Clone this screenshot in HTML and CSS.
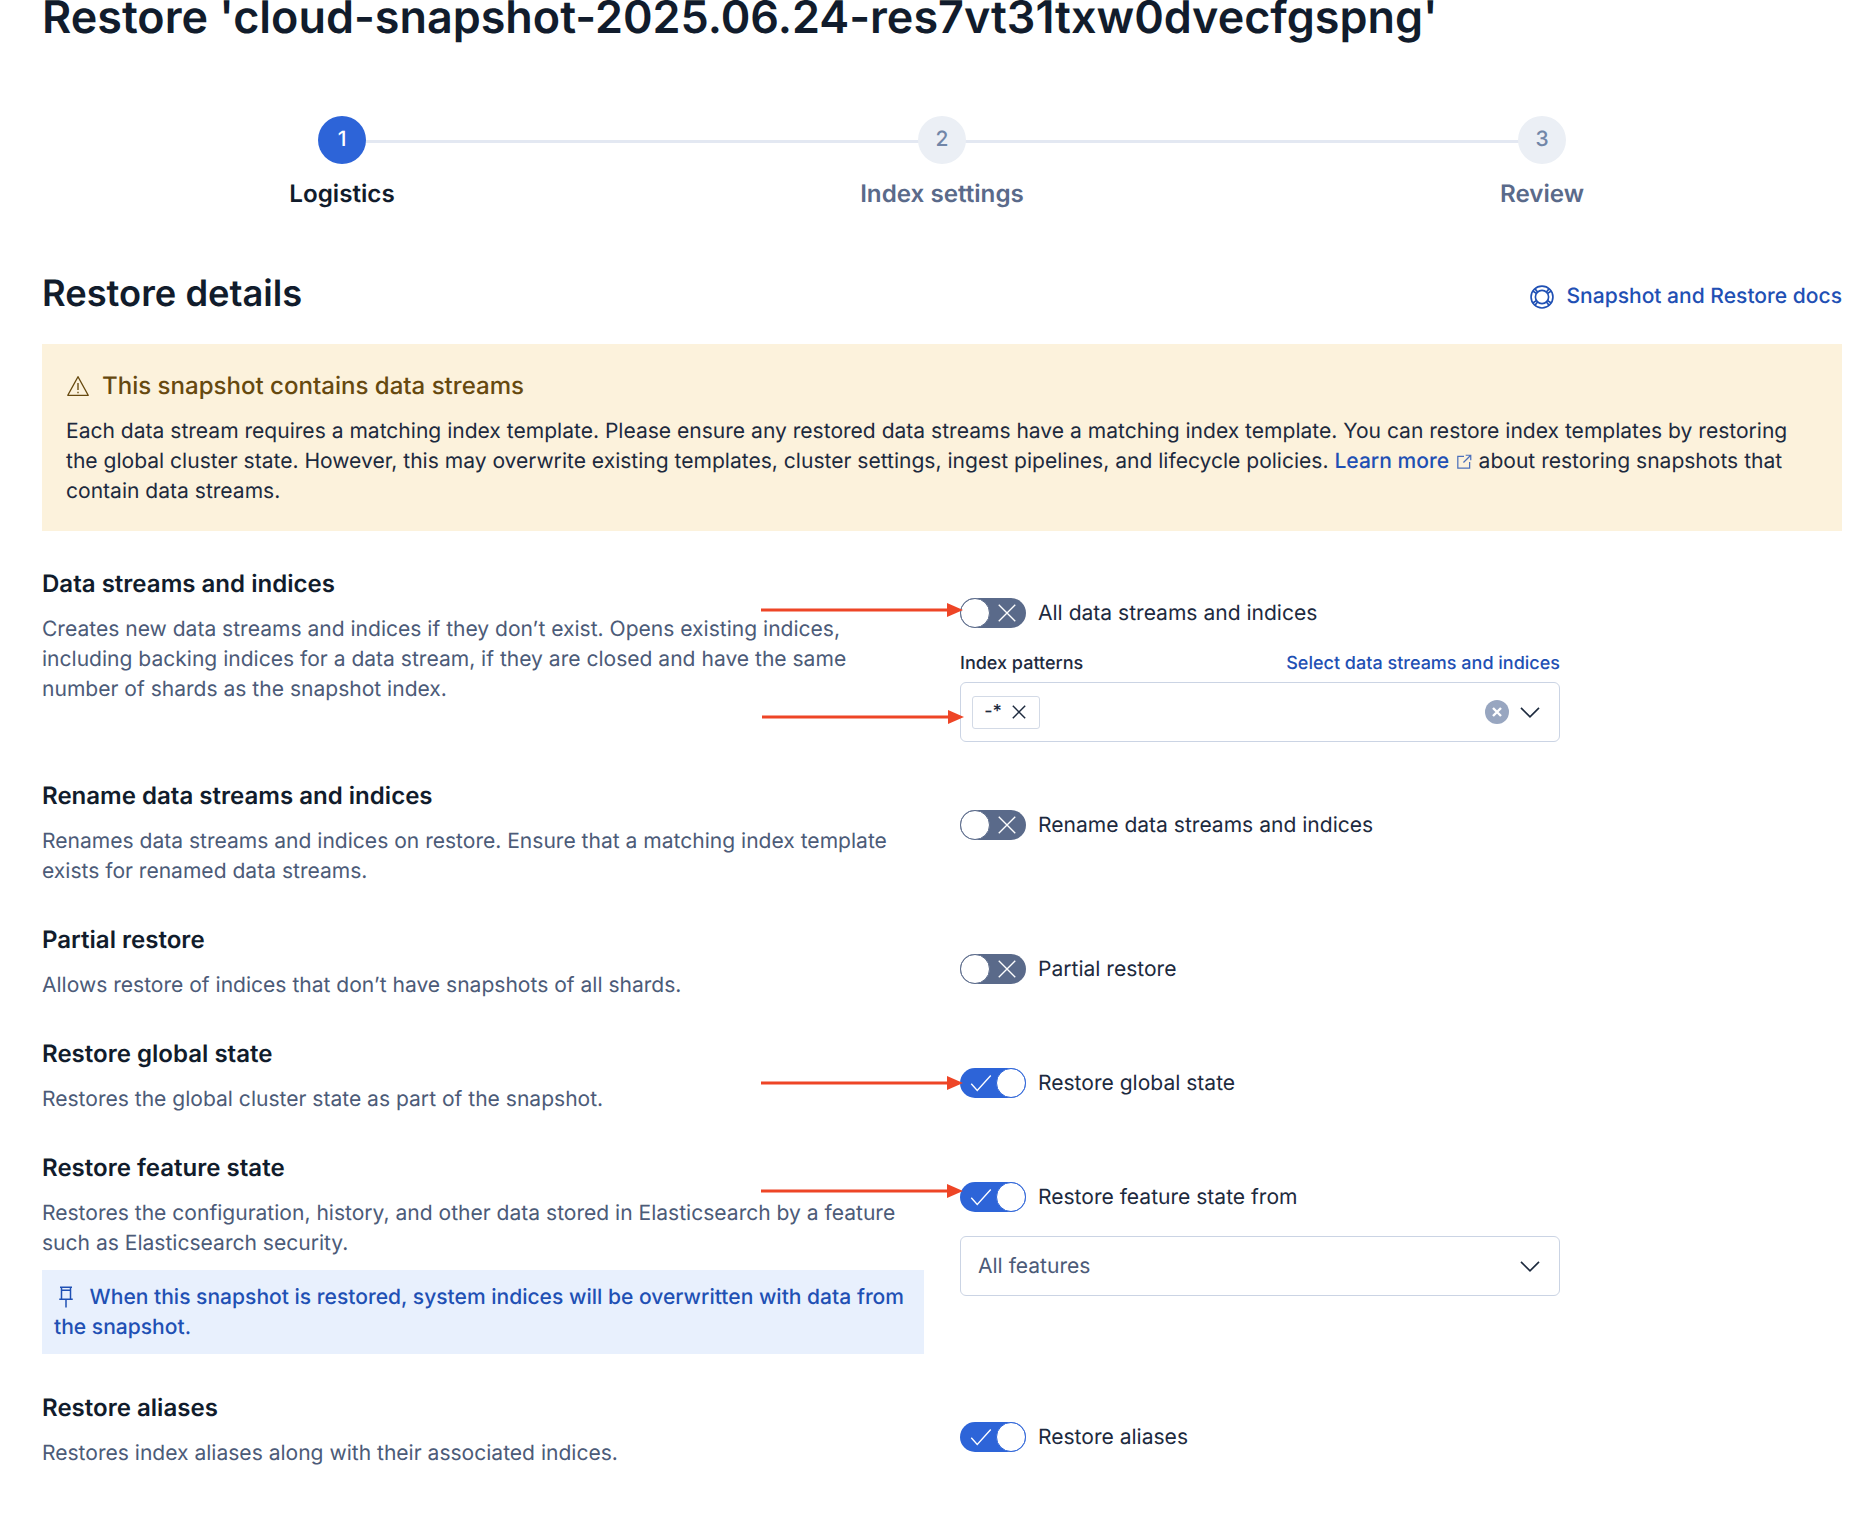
FILE: index.html
```html
<!DOCTYPE html>
<html lang="en">
<head>
    <meta charset="UTF-8">
    <title>Restore snapshot</title>
    <link rel="stylesheet" href="styles.css">
</head>
<body>
    <div class="page">
        <h1 class="page-title">Restore 'cloud-snapshot-2025.06.24-res7vt31txw0dvecfgspng'</h1>

        <div class="steps">
            <div class="step step-active">
                <div class="step-num">1</div>
                <div class="step-label">Logistics</div>
            </div>
            <div class="step">
                <div class="step-num">2</div>
                <div class="step-label">Index settings</div>
            </div>
            <div class="step">
                <div class="step-num">3</div>
                <div class="step-label">Review</div>
            </div>
        </div>

        <div class="details-header">
            <h2>Restore details</h2>
            <a class="docs-link">
                <svg width="24" height="24" viewBox="0 0 16 16" fill="none" stroke="currentColor" stroke-width="1.1"><circle cx="8" cy="8" r="7.3"/><circle cx="8" cy="8" r="4.4"/><path d="M3.2 2.4l2 2.4M12.8 2.4l-2 2.4M3.2 13.6l2-2.4M12.8 13.6l-2-2.4M1.9 4l2.3 1.6M14.1 4l-2.3 1.6M1.9 12l2.3-1.6M14.1 12l-2.3-1.6"/></svg>
                Snapshot and Restore docs
            </a>
        </div>

        <div class="callout-warning">
            <div class="callout-title">
                <svg width="24" height="24" viewBox="0 0 16 16" fill="none" stroke="currentColor" stroke-width="0.9"><path d="M8 1.8L14.8 14.2H1.2z" stroke-linejoin="round"/><path d="M8 6v4.6M8 11.8v1"/></svg>
                This snapshot contains data streams
            </div>
            <p>Each data stream requires a matching index template. Please ensure any restored data streams have a matching index template. You can restore index templates by restoring the global cluster state. However, this may overwrite existing templates, cluster settings, ingest pipelines, and lifecycle policies. <a class="link">Learn more <svg class="popout" width="18" height="18" viewBox="0 0 16 16" fill="none" stroke="currentColor" stroke-width="1.1"><path d="M8 3H2.5v10.5H13V8M9.5 2H14v4.5M14 2L7.5 8.5"/></svg></a> about restoring snapshots that contain data streams.</p>
        </div>

        <div class="row">
            <div class="row-text">
                <h3>Data streams and indices</h3>
                <p>Creates new data streams and indices if they don’t exist. Opens existing indices, including backing indices for a data stream, if they are closed and have the same number of shards as the snapshot index.</p>
            </div>
            <div class="row-field">
                <div class="switch-row">
                    <svg class="arrow arrow-up" width="202" height="14" viewBox="0 0 202 14"><path d="M0 5.5h190v3H0z"/><path d="M186 0l16 7-16 7z"/></svg>
                    <span class="switch"><span class="thumb"></span><svg width="24" height="24" viewBox="0 0 16 16" fill="none" stroke="#fff" stroke-width="0.9"><path d="M2.500 2.500l11 11M13.500 2.500l-11 11"/></svg></span>
                    <span class="switch-label">All data streams and indices</span>
                </div>
                <div class="field-labels">
                    <label>Index patterns</label>
                    <a class="link">Select data streams and indices</a>
                </div>
                <div class="combo">
                    <svg class="arrow arrow-down" width="202" height="14" viewBox="0 0 202 14"><path d="M0 5.5h190v3H0z"/><path d="M186 0l16 7-16 7z"/></svg>
                    <span class="chip">-* <svg width="18" height="18" viewBox="0 0 16 16" fill="none" stroke="#1d2a3e" stroke-width="1.3"><path d="M2.5 2.5l11 11M13.5 2.5l-11 11"/></svg></span>
                    <span class="combo-clear"><svg width="12" height="12" viewBox="0 0 12 12" fill="none" stroke="#fff" stroke-width="2.4"><path d="M2 2l8 8M10 2l-8 8"/></svg></span>
                    <svg width="24" height="24" viewBox="0 0 16 16" fill="none" stroke="#1d2a3e" stroke-width="1.1"><path d="M2 5.2l6 6 6-6"/></svg>
                </div>
            </div>
        </div>

        <div class="row">
            <div class="row-text">
                <h3>Rename data streams and indices</h3>
                <p>Renames data streams and indices on restore. Ensure that a matching index template exists for renamed data streams.</p>
            </div>
            <div class="row-field">
                <div class="switch-row">
                    <span class="switch"><span class="thumb"></span><svg width="24" height="24" viewBox="0 0 16 16" fill="none" stroke="#fff" stroke-width="0.9"><path d="M2.500 2.500l11 11M13.500 2.500l-11 11"/></svg></span>
                    <span class="switch-label">Rename data streams and indices</span>
                </div>
            </div>
        </div>

        <div class="row">
            <div class="row-text">
                <h3>Partial restore</h3>
                <p>Allows restore of indices that don’t have snapshots of all shards.</p>
            </div>
            <div class="row-field">
                <div class="switch-row">
                    <span class="switch"><span class="thumb"></span><svg width="24" height="24" viewBox="0 0 16 16" fill="none" stroke="#fff" stroke-width="0.9"><path d="M2.500 2.500l11 11M13.500 2.500l-11 11"/></svg></span>
                    <span class="switch-label">Partial restore</span>
                </div>
            </div>
        </div>

        <div class="row">
            <div class="row-text">
                <h3>Restore global state</h3>
                <p>Restores the global cluster state as part of the snapshot.</p>
            </div>
            <div class="row-field">
                <div class="switch-row">
                    <svg class="arrow arrow-flat" width="202" height="14" viewBox="0 0 202 14"><path d="M0 5.5h190v3H0z"/><path d="M186 0l16 7-16 7z"/></svg>
                    <span class="switch switch-on"><svg width="24" height="24" viewBox="0 0 16 16" fill="none" stroke="#fff" stroke-width="0.9"><path d="M1.500 8.500l4 4.500 9-10"/></svg><span class="thumb"></span></span>
                    <span class="switch-label">Restore global state</span>
                </div>
            </div>
        </div>

        <div class="row">
            <div class="row-text">
                <h3>Restore feature state</h3>
                <p>Restores the configuration, history, and other data stored in Elasticsearch by a feature such as Elasticsearch security.</p>
                <div class="callout-info">
                    <svg width="24" height="24" viewBox="0 0 16 16" fill="none" stroke="currentColor" stroke-width="1"><path d="M4 1.5h8M5 1.5v7.5M11 1.5v7.5M3.5 9.500h9M8 9.500v5.500M5 3.500h6"/></svg>
                    When this snapshot is restored, system indices will be overwritten with data from the snapshot.
                </div>
            </div>
            <div class="row-field">
                <div class="switch-row">
                    <svg class="arrow arrow-high" width="202" height="14" viewBox="0 0 202 14"><path d="M0 5.5h190v3H0z"/><path d="M186 0l16 7-16 7z"/></svg>
                    <span class="switch switch-on"><svg width="24" height="24" viewBox="0 0 16 16" fill="none" stroke="#fff" stroke-width="0.9"><path d="M1.500 8.500l4 4.500 9-10"/></svg><span class="thumb"></span></span>
                    <span class="switch-label">Restore feature state from</span>
                </div>
                <div class="select">
                    <span class="select-value">All features</span>
                    <svg width="24" height="24" viewBox="0 0 16 16" fill="none" stroke="#1d2a3e" stroke-width="1.1"><path d="M2 5.2l6 6 6-6"/></svg>
                </div>
            </div>
        </div>

        <div class="row">
            <div class="row-text">
                <h3>Restore aliases</h3>
                <p>Restores index aliases along with their associated indices.</p>
            </div>
            <div class="row-field">
                <div class="switch-row">
                    <span class="switch switch-on"><svg width="24" height="24" viewBox="0 0 16 16" fill="none" stroke="#fff" stroke-width="0.9"><path d="M1.500 8.500l4 4.500 9-10"/></svg><span class="thumb"></span></span>
                    <span class="switch-label">Restore aliases</span>
                </div>
            </div>
        </div>
    </div>
</body>
</html>
```

FILE: styles.css
```css
body {
    font-family: Inter, "Liberation Sans", sans-serif;
    font-size: 21.05px;
    line-height: 30px;
    color: #1d2a3e;
    margin: 0;
    background-color: white;
    overflow: hidden;
    text-rendering: geometricPrecision;
}

.page {
    padding: 0 18px 0 42px;
}

h1, h2, h3, p {
    margin: 0;
}

.page-title {
    font-size: 44.9px;
    line-height: 48px;
    font-weight: 600;
    color: #111c2c;
    margin-top: -7px;
    white-space: nowrap;
}

.steps {
    display: flex;
    margin-top: 75px;
}

.step {
    flex: 1;
    display: flex;
    flex-direction: column;
    align-items: center;
    position: relative;
}

.step:not(:last-child)::after {
    content: "";
    position: absolute;
    left: 50%;
    width: 100%;
    top: 24px;
    height: 3px;
    background-color: #e3e8f2;
}

.step-num {
    width: 48px;
    height: 48px;
    border-radius: 50%;
    background-color: #ebeff5;
    color: #7186a8;
    font-size: 21px;
    font-weight: 500;
    display: flex;
    align-items: center;
    justify-content: center;
    position: relative;
    z-index: 1;
}

.step-label {
    font-size: 24.2px;
    line-height: 36px;
    font-weight: 600;
    color: #5a6a8a;
    margin-top: 12px;
}

.step-active .step-num {
    background-color: #2d64d8;
    color: white;
}

.step-active .step-label {
    color: #111c2c;
}

.details-header {
    display: flex;
    justify-content: space-between;
    align-items: center;
    margin-top: 57px;
    margin-bottom: 27px;
}

.details-header h2 {
    font-size: 36.3px;
    line-height: 48px;
    font-weight: 600;
    color: #111c2c;
}

.docs-link {
    display: flex;
    align-items: center;
    gap: 12px;
    color: #1f50b4;
    font-weight: 500;
    margin-top: 7px;
}

.link {
    color: #1f50b4;
    font-weight: 500;
}

.popout {
    vertical-align: -3px;
    opacity: 0.8;
}

.callout-warning {
    background-color: #fcf2dc;
    padding: 24px;
    margin-bottom: 35px;
}

.callout-title {
    display: flex;
    align-items: center;
    gap: 12px;
    font-size: 24.05px;
    line-height: 36px;
    font-weight: 500;
    color: #66490f;
    margin-bottom: 13px;
}

.row {
    display: flex;
    gap: 36px;
    margin-bottom: 35px;
}

.row-text {
    width: 882px;
    color: #4c5b78;
}

.row-text h3 {
    font-size: 24.05px;
    line-height: 36px;
    font-weight: 600;
    color: #111c2c;
    margin-bottom: 13px;
}

.row-text p {
    width: 870px;
}

.row-field {
    width: 600px;
    padding-top: 32px;
}

.switch-row {
    display: flex;
    align-items: center;
    gap: 12px;
    height: 30px;
    position: relative;
}

.switch-label {
    margin-top: 2px;
}

.switch {
    width: 66px;
    height: 30px;
    border-radius: 15px;
    background-color: #5a6a8a;
    display: flex;
    align-items: center;
    justify-content: space-between;
    padding-right: 7px;
    box-sizing: border-box;
}

.thumb {
    width: 30px;
    height: 30px;
    box-sizing: border-box;
    border-radius: 50%;
    background-color: white;
    border: 1.5px solid #5a6a8a;
}

.switch-on {
    background-color: #2d64d8;
    padding-right: 0;
    padding-left: 9px;
}

.switch-on .thumb {
    border-color: #2d64d8;
}

.arrow {
    position: absolute;
    left: -199px;
    fill: #ee4526;
    z-index: 2;
}

.arrow-up {
    top: 5px;
}

.arrow-high {
    top: 2px;
}

.arrow-flat {
    top: 8px;
}

.arrow-down {
    top: 27px;
}

.field-labels {
    display: flex;
    justify-content: space-between;
    align-items: center;
    font-size: 18px;
    line-height: 24px;
    font-weight: 500;
    margin-top: 24px;
    margin-bottom: 6px;
}

.combo {
    height: 60px;
    box-sizing: border-box;
    border: 1.5px solid #cbd4e4;
    border-radius: 6px;
    display: flex;
    align-items: center;
    padding: 0 17px 0 11px;
    margin-bottom: 1px;
    position: relative;
}

.chip {
    height: 33px;
    width: 68px;
    box-sizing: border-box;
    border: 1.5px solid #d3dae6;
    border-radius: 3px;
    display: flex;
    align-items: center;
    justify-content: center;
    gap: 8px;
    font-size: 18px;
    font-weight: 500;
    margin-right: auto;
}

.combo-clear {
    width: 24px;
    height: 24px;
    border-radius: 50%;
    background-color: #98a6c0;
    display: flex;
    align-items: center;
    justify-content: center;
    margin-right: 9px;
}

.select {
    height: 60px;
    box-sizing: border-box;
    border: 1.5px solid #cbd4e4;
    border-radius: 6px;
    display: flex;
    align-items: center;
    justify-content: space-between;
    padding: 0 17px 0 17px;
    margin-top: 24px;
    color: #4c5b78;
}

.select-value {
    margin-top: 2px;
}

.callout-info {
    background-color: #e8f0fd;
    color: #1f50b4;
    font-weight: 500;
    padding: 13px 12px 11px;
    margin-top: 11px;
    margin-bottom: 1px;
}

.callout-info svg {
    vertical-align: -5px;
    margin-right: 6px;
}
```
